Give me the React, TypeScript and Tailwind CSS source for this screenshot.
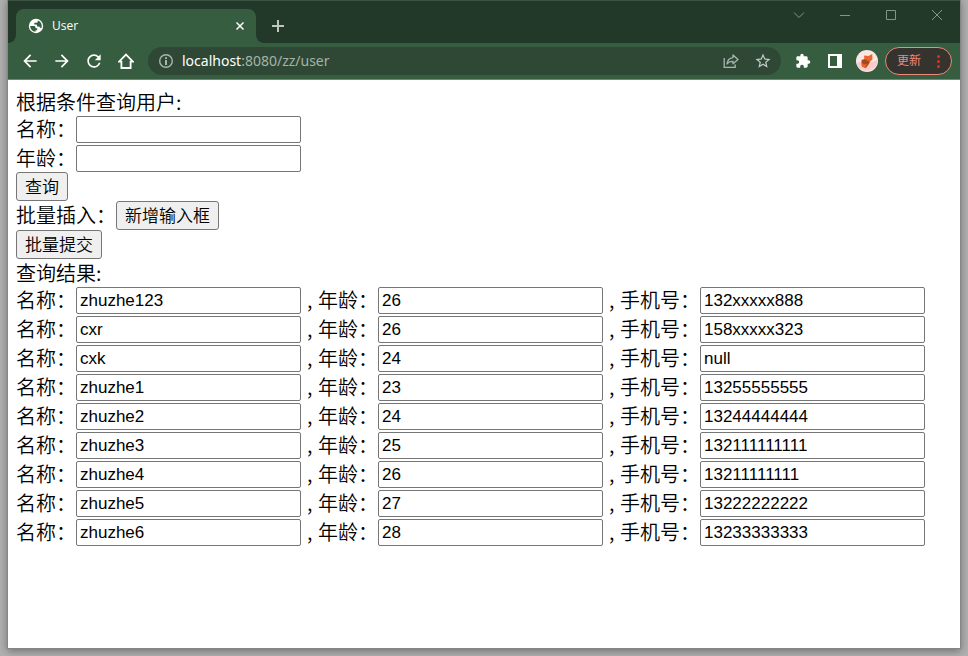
import { useId, useState, type ReactNode } from "react";
import { MdArrowBack, MdArrowForward, MdExtension, MdRefresh, MdStarBorder } from "react-icons/md";

const users = [
  { name: "zhuzhe123", age: "26", phone: "132xxxxx888" },
  { name: "cxr", age: "26", phone: "158xxxxx323" },
  { name: "cxk", age: "24", phone: "null" },
  { name: "zhuzhe1", age: "23", phone: "13255555555" },
  { name: "zhuzhe2", age: "24", phone: "13244444444" },
  { name: "zhuzhe3", age: "25", phone: "132111111111" },
  { name: "zhuzhe4", age: "26", phone: "13211111111" },
  { name: "zhuzhe5", age: "27", phone: "13222222222" },
  { name: "zhuzhe6", age: "28", phone: "13233333333" },
];

function IconButton({ label, children }: { label: string; children: ReactNode }) {
  return (
    <button type="button" aria-label={label} className="flex h-7 w-8 shrink-0 items-center justify-center">
      {children}
    </button>
  );
}

function CaptionButton({ label, children }: { label: string; children: ReactNode }) {
  return (
    <button type="button" aria-label={label} className="flex h-7 w-[46px] items-center justify-center">
      <svg viewBox="0 0 12 12" className="size-3" fill="none" stroke="#80968a" strokeWidth="1">
        {children}
      </svg>
    </button>
  );
}

function TabStrip() {
  return (
    <div className="flex h-[43px] items-start border-t border-[#3b5142] bg-[#22392a]">
      <div className="flex h-[42px] items-end">
        <svg viewBox="0 0 8 8" className="size-2" fill="#365d3f">
          <path d="M8 0v8H0a8 8 0 0 0 8-8z" />
        </svg>
        <div className="flex h-[34px] w-60 items-center rounded-t-lg bg-[#365d3f] pr-2 pl-3 text-white">
          <svg viewBox="0 0 16 16" className="size-4">
            <circle cx="8" cy="8" r="7.2" fill="#fff" />
            <path
              d="M2.200 8H6c.9 0 1.500.6 1.500 1.500v.8H9.200v2H7.600v1.500C4.600 13.600 2.200 11.200 2.200 8zM9.800 2.500c2.400.8 4 3 4 5.500 0 .8-.2 1.600-.5 2.300l-1.300-.9c-.3-.6-.8-.9-1.500-.9H9V7.200c0-.5-.3-.8-.8-.8H6.300V4.700h2.300c.7 0 1.200-.5 1.200-1.200z"
              fill="#365d3f"
            />
          </svg>
          <span className="ml-2 flex-1 text-xs">User</span>
          <button type="button" aria-label="关闭标签页" className="flex size-4 items-center justify-center">
            <svg viewBox="0 0 8 8" className="size-2" fill="none" stroke="#fff" strokeWidth="1.500">
              <path d="M.5.5l7 7M7.500.5l-7 7" />
            </svg>
          </button>
        </div>
        <svg viewBox="0 0 8 8" className="size-2" fill="#365d3f">
          <path d="M0 0v8h8a8 8 0 0 1-8-8z" />
        </svg>
      </div>
      <button type="button" aria-label="新标签页" className="mt-[11px] flex h-7 w-7 items-center justify-center">
        <svg viewBox="0 0 12 12" className="size-3" fill="#bcc7bf">
          <path d="M5 0h2v5h5v2H7v5H5V7H0V5h5z" />
        </svg>
      </button>
      <div className="ml-auto flex">
        <CaptionButton label="搜索标签页">
          <path d="M1 3.500l5 5 5-5" />
        </CaptionButton>
        <CaptionButton label="最小化">
          <path d="M1 6.500h10" />
        </CaptionButton>
        <CaptionButton label="最大化">
          <path d="M1.500 1.500h9v9h-9z" />
        </CaptionButton>
        <CaptionButton label="关闭">
          <path d="M1 1l10 10M11 1L1 11" />
        </CaptionButton>
      </div>
    </div>
  );
}

function Toolbar() {
  return (
    <div className="flex h-[37px] items-center border-b border-[#6b8872] bg-[#365d3f] pr-2 pl-[6px] text-white">
      <IconButton label="后退">
        <MdArrowBack className="size-5" />
      </IconButton>
      <IconButton label="前进">
        <MdArrowForward className="size-5" />
      </IconButton>
      <IconButton label="重新加载">
        <MdRefresh className="size-5" />
      </IconButton>
      <IconButton label="主页">
        <svg viewBox="0 0 16 16" className="size-4" fill="none" stroke="#fff" strokeWidth="1.800">
          <path d="M1 8.700H3.400V15H12.600V8.700H15L8 1.500z" strokeLinejoin="miter" />
        </svg>
      </IconButton>

      <div className="ml-[6px] flex h-7 min-w-0 flex-1 items-center rounded-full bg-[#2f4836] pr-[2px] pl-[11px]">
        <svg viewBox="0 0 14 14" className="size-[14px] shrink-0">
          <circle cx="7" cy="7" r="6.300" fill="none" stroke="#a9b6ad" strokeWidth="1.400" />
          <path d="M6 3.200h2v1.800H6zM6 6h2v5H6z" fill="#a9b6ad" />
        </svg>
        <a
          href="#user"
          className="ml-[9px] min-w-0 flex-1 truncate font-['Noto_Sans',sans-serif] text-sm text-[#a5b3a9]"
        >
          <span className="text-white">localhost</span>:8080/zz/user
        </a>
        <IconButton label="分享">
          <svg viewBox="0 0 16 16" className="size-4" fill="none" stroke="#a9b6ad" strokeWidth="1.300">
            <path d="M1.200 5v9.300h11V11.500" />
            <path d="M10 2l5 4.500-5 4.300V8.300C7.200 8.200 5.400 9 4 11c.4-3.500 2.500-6 6-6.400z" strokeLinejoin="round" />
          </svg>
        </IconButton>
        <IconButton label="收藏">
          <MdStarBorder className="size-[18px] text-[#c3ccc6]" />
        </IconButton>
      </div>

      <div className="ml-[6px] flex items-center">
        <IconButton label="扩展程序">
          <MdExtension className="size-4" />
        </IconButton>
        <IconButton label="侧边栏">
          <svg viewBox="0 0 14 14" className="size-[14px]">
            <path d="M0 0h14v14H0zM2 2v10h7V2z" fill="#fff" fillRule="evenodd" />
          </svg>
        </IconButton>
        <IconButton label="个人资料">
          <svg viewBox="0 0 22 22" className="size-[22px]">
            <circle cx="11" cy="11" r="11" fill="#fbe6e5" />
            <path d="M.3 13 6 11.500l9 1 6.800-3A11 11 0 0 1 .3 13z" fill="#f9cbc9" />
            <path d="M8 5.500l4.500.5L16.200 4l.3 5.500-3.500 3-4.500-2z" fill="#e8662a" />
            <path d="M5.500 10l3-1 5.500 3-1.500 2.500L10 18l-4-1.500z" fill="#a8481f" />
            <path d="M5 12l3 2.500 3-.5-2 4-3-1.500z" fill="#e8662a" />
          </svg>
        </IconButton>
      </div>
      <button
        type="button"
        className="ml-[2px] flex h-7 w-[67px] shrink-0 items-center justify-between rounded-full border border-[#ee877c] bg-[#34332e] px-[11px] text-xs text-[#ee877c]"
      >
        更新
        <svg viewBox="0 0 3 13" className="h-[13px] w-[3px]" fill="#e0301e">
          <circle cx="1.500" cy="1.500" r="1.500" />
          <circle cx="1.500" cy="6.500" r="1.500" />
          <circle cx="1.500" cy="11.500" r="1.500" />
        </svg>
      </button>
    </div>
  );
}

function Field({ label, value = "" }: { label: string; value?: string }) {
  const id = useId();
  const [text, setText] = useState(value);
  return (
    <div className="flex items-start">
      <label htmlFor={id} className="shrink-0 leading-[27px]">
        {label}：
      </label>
      <input
        id={id}
        type="text"
        value={text}
        onChange={(e) => setText(e.target.value)}
        className="mt-px h-[27px] w-[225px] rounded-xs border border-[#767676] bg-white px-[3px] font-['Liberation_Sans',Arial,sans-serif] text-[17px] font-normal"
      />
    </div>
  );
}

function PageButton({ children }: { children: ReactNode }) {
  return (
    <button
      type="button"
      className="h-[29px] rounded-[3px] border border-[#767676] bg-[#efefef] px-2 pb-[2px] text-[17px] leading-[25px]"
    >
      {children}
    </button>
  );
}

function Separator() {
  return <span className="w-[17px] shrink-0 pl-[6px] leading-[27px]">,</span>;
}

export default function App() {
  return (
    <div className="flex min-h-screen flex-col bg-[#b0b0b0] px-2 pb-2 font-['Open_Sans','Noto_Sans_CJK_SC',sans-serif]">
      <div className="flex flex-1 flex-col bg-white shadow-[0_0_0_1px_#858585,0_2px_8px_1px_#707070]">
        <TabStrip />
        <Toolbar />
        <main className="flex-1 p-2 font-['Noto_Sans_CJK_SC',sans-serif] text-xl font-[350] text-black">
          <h1 className="leading-[27px] font-[350]">根据条件查询用户:</h1>
          <form onSubmit={(e) => e.preventDefault()}>
            <div className="h-[29px]">
              <Field label="名称" />
            </div>
            <div className="h-7">
              <Field label="年龄" />
            </div>
            <div className="flex">
              <PageButton>查询</PageButton>
            </div>
          </form>
          <div className="flex">
            <span className="leading-[27px]">批量插入：</span>
            <PageButton>新增输入框</PageButton>
          </div>
          <div className="flex">
            <PageButton>批量提交</PageButton>
          </div>
          <h2 className="leading-[27px] font-[350]">查询结果:</h2>
          {users.map((user) => (
            <div key={user.name} className="flex h-[29px]">
              <Field label="名称" value={user.name} />
              <Separator />
              <Field label="年龄" value={user.age} />
              <Separator />
              <Field label="手机号" value={user.phone} />
            </div>
          ))}
        </main>
      </div>
    </div>
  );
}
